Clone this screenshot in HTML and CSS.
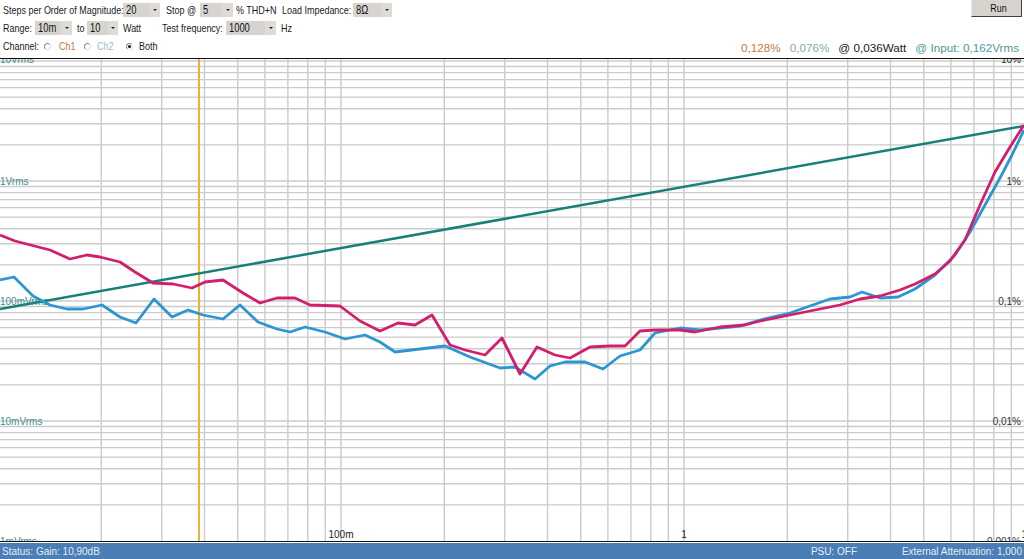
FILE: index.html
```html
<!DOCTYPE html>
<html>
<head>
<meta charset="utf-8">
<title>THD+N Sweep</title>
<link rel="stylesheet" href="styles.css">
</head>
<body>
<div class="app">
  <header class="toolbar">
    <div class="controls">
      <div class="row">
        <span class="lbl w-steps"><span class="tx">Steps per Order of Magnitude:</span></span>
        <span class="combo w37"><span class="val"><span class="tx">20</span></span><span class="arr"></span></span>
        <span class="lbl w-stop"><span class="tx">Stop @</span></span>
        <span class="combo w33"><span class="val"><span class="tx">5</span></span><span class="arr"></span></span>
        <span class="lbl w-thd"><span class="tx">% THD+N</span></span>
        <span class="lbl w-load"><span class="tx">Load Impedance:</span></span>
        <span class="combo w39"><span class="val"><span class="tx">8Ω</span></span><span class="arr"></span></span>
      </div>
      <div class="row">
        <span class="lbl w-range"><span class="tx">Range:</span></span>
        <span class="combo w37"><span class="val"><span class="tx">10m</span></span><span class="arr"></span></span>
        <span class="lbl w-to"><span class="tx">to</span></span>
        <span class="combo w31"><span class="val"><span class="tx">10</span></span><span class="arr"></span></span>
        <span class="lbl w-watt"><span class="tx">Watt</span></span>
        <span class="lbl w-freq"><span class="tx">Test frequency:</span></span>
        <span class="combo w50"><span class="val"><span class="tx">1000</span></span><span class="arr"></span></span>
        <span class="lbl w-hz"><span class="tx">Hz</span></span>
      </div>
      <div class="row">
        <span class="lbl w-chan"><span class="tx">Channel:</span></span>
        <span class="radio"></span>
        <span class="lbl w-ch1 ch1"><span class="tx">Ch1</span></span>
        <span class="radio"></span>
        <span class="lbl w-ch2 ch2"><span class="tx">Ch2</span></span>
        <span class="radio checked"></span>
        <span class="lbl w-both"><span class="tx">Both</span></span>
      </div>
    </div>
    <div class="side">
      <button class="run"><span class="tx">Run</span></button>
      <div class="readout">
        <span class="r-ch1">0,128%</span>
        <span class="r-ch2">0,076%</span>
        <span class="r-watt">@ 0,036Watt</span>
        <span class="r-in">@ Input: 0,162Vrms</span>
      </div>
    </div>
  </header>

  <div class="chart">
    <svg class="plot" width="1024" height="482" viewBox="0 59 1024 482">
      <path class="grid" d="M0 61H1024 M0 66.5H1024 M0 72.6H1024 M0 79.6H1024 M0 87.6H1024 M0 97.1H1024 M0 108.8H1024 M0 123.8H1024 M0 144.9H1024 M0 181H1024 M0 186.5H1024 M0 192.6H1024 M0 199.6H1024 M0 207.6H1024 M0 217.1H1024 M0 228.8H1024 M0 243.8H1024 M0 264.9H1024 M0 301H1024 M0 306.5H1024 M0 312.6H1024 M0 319.6H1024 M0 327.6H1024 M0 337.1H1024 M0 348.8H1024 M0 363.8H1024 M0 384.9H1024 M0 421H1024 M0 426.5H1024 M0 432.6H1024 M0 439.6H1024 M0 447.6H1024 M0 457.1H1024 M0 468.8H1024 M0 483.8H1024 M0 504.9H1024"/>
      <path class="grid" d="M101.3 59V541 M161.7 59V541 M204.5 59V541 M237.8 59V541 M264.9 59V541 M287.9 59V541 M307.8 59V541 M325.3 59V541 M341 59V541 M444.3 59V541 M504.7 59V541 M547.5 59V541 M580.8 59V541 M607.9 59V541 M630.9 59V541 M650.8 59V541 M668.3 59V541 M684 59V541 M787.3 59V541 M847.7 59V541 M890.5 59V541 M923.8 59V541 M950.9 59V541 M973.9 59V541 M993.8 59V541 M1011.3 59V541"/>

      <text class="ylab" x="0" y="63">10Vrms</text>
      <text class="ylab" x="0" y="185">1Vrms</text>
      <text class="ylab" x="0" y="305">100mVrms</text>
      <text class="ylab" x="0" y="425">10mVrms</text>
      <text class="ylab" x="0" y="545">1mVrms</text>

      <text class="plab" x="1021" y="63">10%</text>
      <text class="plab" x="1021" y="185">1%</text>
      <text class="plab" x="1021" y="305">0,1%</text>
      <text class="plab" x="1021" y="425">0,01%</text>
      <text class="plab" x="1021" y="545">0,001%</text>

      <text class="xlab" x="341" y="538">100m</text>
      <text class="xlab" x="684" y="538">1</text>
      <text class="xlab" x="1027" y="538">10</text>

      <line class="marker" x1="199" y1="59" x2="199" y2="541"/>

      <line class="input" x1="0" y1="309" x2="1024" y2="126"/>

      <polyline class="ch2-line" points="0,280 14,277 33,296 50,305 67,309 83,309 102,305 120,317 136,323 154,299 172,317 188,310 203,315 223,319 240,305 258,322 277,329 290,332 305,327 325,332 345,339 365,335 380,342 395,352 420,349 445,346 470,357 500,368 515,367 535,379 550,366 565,362 585,362 603,369 620,356 640,350 655,333 680,328 700,330 720,328 740,326 760,320 790,313 810,306 830,299 850,297 862,292 880,298 898,297 915,289 935,275 955,255 970,232 985,205 1000,178 1012,155 1024,130"/>

      <polyline class="ch1-line" points="0,235 15,241 50,250 70,259 87,255 100,257 120,262 135,272 153,283 173,284 192,288 205,282 223,280 243,293 260,303 277,298 295,298 310,305 340,306 360,321 380,331 398,323 415,325 432,315 450,345 465,350 485,355 502,338 520,374 537,347 555,355 570,358 590,347 610,346 625,346 640,331 655,330 680,330 695,332 720,327 745,325 760,321 790,315 815,310 840,305 860,299 880,296 900,290 915,284 935,274 950,261 965,240 980,205 995,172 1010,147 1024,125"/>
    </svg>
  </div>

  <footer class="status">
    <span class="st-main">Status: Gain: 10,90dB</span>
    <span class="st-psu">PSU: OFF</span>
    <span class="st-att">External Attenuation: 1,000</span>
  </footer>
</div>
</body>
</html>
```
FILE: styles.css
```css
html, body {
  margin: 0;
  padding: 0;
  background: #ffffff;
}

.app {
  width: 1024px;
  height: 559px;
  overflow: hidden;
  display: flex;
  flex-direction: column;
  font-family: "Liberation Sans", Arial, sans-serif;
  color: #1a1a1a;
}

/* ---------- toolbar ---------- */
.toolbar {
  height: 58px;
  display: flex;
  justify-content: space-between;
  flex-shrink: 0;
}

.controls {
  display: flex;
  flex-direction: column;
  padding: 1px 0 0 3px;
}

.row {
  height: 18px;
  display: flex;
  align-items: center;
}

/* condensed text: the UI font is narrow, so the glyphs are squeezed */
.tx {
  display: inline-block;
  white-space: nowrap;
  transform: scaleX(0.78);
  transform-origin: left center;
}

.lbl {
  font-size: 11.5px;
  white-space: nowrap;
  flex-shrink: 0;
  line-height: 14px;
}

.w-steps { width: 120px; }
.w-stop  { width: 34px; margin-left: 6px; }
.w-thd   { width: 46px; margin-left: 3px; }
.w-load  { width: 71px; }
.w-range { width: 32px; }
.w-to    { width: 10px; margin-left: 5px; }
.w-watt  { width: 39px; margin-left: 5px; }
.w-freq  { width: 64px; }
.w-hz    { margin-left: 5px; }
.w-chan  { width: 41px; }
.w-ch1   { width: 25px; margin-left: 8px; }
.w-ch2   { width: 29px; margin-left: 6px; }
.w-both  { margin-left: 6px; }

.ch1 { color: #c8743a; }
.ch2 { color: #9bb9bd; }

.combo {
  height: 14px;
  display: flex;
  background: #d7d4cf;
  flex-shrink: 0;
}
.w31 { width: 31px; }
.w33 { width: 33px; }
.w37 { width: 37px; }
.w39 { width: 39px; }
.w50 { width: 50px; }

.combo .val {
  flex: 1;
  font-size: 12px;
  line-height: 15px;
  padding-left: 3px;
  color: #111;
  overflow: hidden;
}

.combo .arr {
  width: 11px;
  background: #dedbd6;
  display: flex;
  align-items: center;
  justify-content: center;
}
.combo .arr::after {
  content: "";
  border-left: 2px solid transparent;
  border-right: 2px solid transparent;
  border-top: 2px solid #222;
}

.radio {
  width: 5px;
  height: 5px;
  border-radius: 50%;
  border: 1px solid #8a8a8a;
  border-right-color: #e0e0e0;
  border-bottom-color: #e0e0e0;
  background: #fff;
  position: relative;
  flex-shrink: 0;
}
.radio.checked::after {
  content: "";
  position: absolute;
  left: 1px;
  top: 1px;
  width: 3px;
  height: 3px;
  border-radius: 50%;
  background: #111;
}

.side {
  display: flex;
  flex-direction: column;
  align-items: flex-end;
  justify-content: space-between;
  padding-right: 2px;
}

.run {
  width: 51px;
  height: 18px;
  margin-top: -1px;
  background: #d6d3ce;
  border: 1px solid #e8e6e2;
  border-right-color: #404040;
  border-bottom-color: #404040;
  font-family: "Liberation Sans", Arial, sans-serif;
  font-size: 11.5px;
  color: #111;
  padding: 0 0 0 4px;
  text-align: center;
}
.run .tx {
  transform-origin: center center;
}

.readout {
  display: flex;
  gap: 9px;
  font-size: 11.7px;
  padding: 0 3px 4px 0;
  white-space: nowrap;
}
.r-ch1  { color: #c97a40; }
.r-ch2  { color: #84acaa; }
.r-watt { color: #1a1a1a; }
.r-in   { color: #4e9a9a; }

/* ---------- chart ---------- */
.chart {
  border-top: 1px solid #111;
  border-bottom: 1px solid #111;
  height: 482px;
  flex-shrink: 0;
}

.plot {
  display: block;
}

.grid {
  stroke: #cbcbcb;
  stroke-width: 1.4;
  fill: none;
}

.ylab {
  font-family: "Liberation Sans", Arial, sans-serif;
  font-size: 10px;
  fill: #3f8e8e;
}
.plab {
  font-family: "Liberation Sans", Arial, sans-serif;
  font-size: 10px;
  fill: #333;
  text-anchor: end;
}
.xlab {
  font-family: "Liberation Sans", Arial, sans-serif;
  font-size: 10px;
  fill: #222;
  text-anchor: middle;
}

.marker {
  stroke: #f0b032;
  stroke-width: 2;
}
.input {
  stroke: #17807a;
  stroke-width: 2.5;
}
.ch1-line, .ch2-line {
  fill: none;
  stroke-width: 2.8;
  stroke-linejoin: round;
}
.ch1-line { stroke: #d21e6c; }
.ch2-line { stroke: #2c96d2; }

/* ---------- status bar ---------- */
.status {
  margin-top: 1px;
  height: 16px;
  background: #4a7eb4;
  display: flex;
  align-items: center;
  font-size: 10px;
  color: #e4edf6;
  padding: 0 2px;
}
.st-main { flex: 1; }
.st-psu  { width: 91px; }
```
